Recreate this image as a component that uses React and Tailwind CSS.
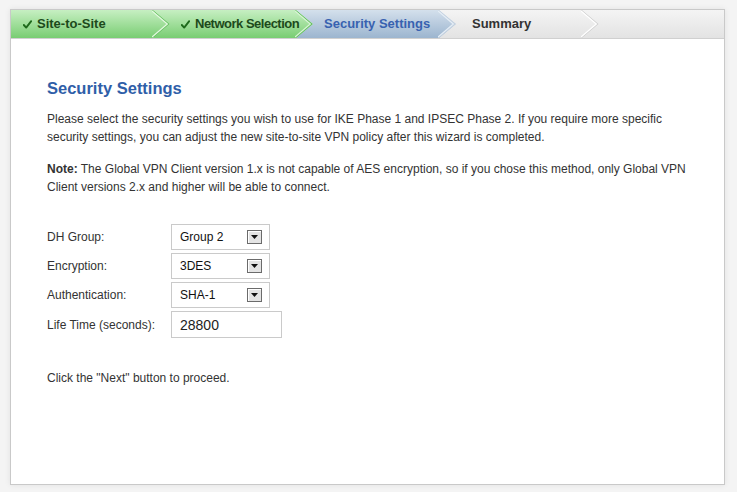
import React from "react";

const font = { fontFamily: '"Liberation Sans", Arial, Helvetica, sans-serif' };

function Chevron({ light, dark }) {
  return (
    <svg className="absolute right-0 top-0 h-[28px] w-[18px]" viewBox="0 0 18 28">
      <polyline points="0.5,0 16.8,14 0.5,28" fill="none" stroke={dark} strokeWidth="1.2" />
      <polyline points="0,1 15.3,14 0,27" fill="none" stroke={light} strokeWidth="1.2" />
    </svg>
  );
}

const clip = {
  clipPath: "polygon(0 0, calc(100% - 17px) 0, 100% 50%, calc(100% - 17px) 100%, 0 100%)",
};

function Tab({ children, bg, z, first, light, dark, pl }) {
  return (
    <div
      className={`relative flex h-[28px] w-[159px] items-center text-[13px] font-bold ${bg} ${z} ${first ? "" : "-ml-[16px]"} ${pl}`}
      style={clip}
    >
      {children}
      <Chevron light={light} dark={dark} />
    </div>
  );
}

function Check() {
  return (
    <svg className="mr-[5px]" width="9" height="9" viewBox="0 0 9 9">
      <path d="M0.8 5 L3.2 7.6 L8.2 1.2" fill="none" stroke="#1f6a1c" strokeWidth="1.9" strokeLinecap="round" strokeLinejoin="round" />
    </svg>
  );
}

function Select({ value }) {
  return (
    <div className="flex h-[26px] w-[99px] items-center justify-between border border-[#cacaca] bg-white pl-[8px] pr-[7px] text-[12px] text-[#111]">
      <span>{value}</span>
      <div className="flex h-[14px] w-[15px] items-center justify-center border border-[#6b6b6b] bg-[#e4e4e4] shadow-[inset_1px_1px_0_#fff]">
        <svg width="7" height="4" viewBox="0 0 7 4">
          <polygon points="0,0 7,0 3.5,4" fill="#111" />
        </svg>
      </div>
    </div>
  );
}

function Row({ label, children }) {
  return (
    <div className="flex items-center">
      <div className="w-[124px] text-[12px] text-[#333]">{label}</div>
      {children}
    </div>
  );
}

export default function App() {
  return (
    <div className="h-[492px] w-[737px] bg-[#f4f4f4] pl-[10px] pt-[9px]" style={font}>
      <div className="flex h-[476px] w-[715px] flex-col border border-[#c9c9c9] bg-white shadow-[0_0_6px_rgba(0,0,0,0.08)]">
        <div className="flex h-[29px] border-b border-[#d0d0d0] bg-gradient-to-b from-[#f4f4f4] to-[#e3e3e3]">
          <Tab first bg="bg-gradient-to-b from-[#c6efc2] to-[#78cd72]" z="z-40" light="#e4f8e0" dark="#6cc166" pl="pl-[12px]">
            <Check />
            <span className="text-[#1d4a1b]">Site-to-Site</span>
          </Tab>
          <Tab bg="bg-gradient-to-b from-[#c6efc2] to-[#78cd72]" z="z-30" light="#d8f4d4" dark="#66c060" pl="pl-[27px]">
            <Check />
            <span className="tracking-[-0.5px] text-[#1d4a1b]">Network Selection</span>
          </Tab>
          <Tab bg="bg-gradient-to-b from-[#d4e0ec] to-[#9cb5cf]" z="z-20" light="#e6eef6" dark="#c5d2e0" pl="pl-[27px]">
            <span className="text-[#3862b0]">Security Settings</span>
          </Tab>
          <Tab bg="bg-gradient-to-b from-[#f4f4f4] to-[#e3e3e3]" z="z-10" light="#ffffff" dark="#d2d2d2" pl="pl-[32px]">
            <span className="text-[#333]">Summary</span>
          </Tab>
        </div>
        <div className="w-[690px] pl-[36px] pt-[39px] text-[12px] leading-[18px] text-[#333]">
          <h1 className="text-[16.5px] font-bold leading-[20px] text-[#2f5ea8]">Security Settings</h1>
          <p className="mt-[12px] w-[653px]">
            Please select the security settings you wish to use for IKE Phase 1 and IPSEC Phase 2. If you require more specific
            security settings, you can adjust the new site-to-site VPN policy after this wizard is completed.
          </p>
          <p className="mt-[14px] w-[653px]">
            <b>Note:</b> The Global VPN Client version 1.x is not capable of AES encryption, so if you chose this method, only Global VPN
            Client versions 2.x and higher will be able to connect.
          </p>
          <div className="mt-[28px] flex flex-col gap-[3px]">
            <Row label="DH Group:">
              <Select value="Group 2" />
            </Row>
            <Row label="Encryption:">
              <Select value="3DES" />
            </Row>
            <Row label="Authentication:">
              <Select value="SHA-1" />
            </Row>
            <Row label="Life Time (seconds):">
              <div className="flex h-[27px] w-[111px] items-center border border-[#cacaca] bg-white pl-[8px] text-[14px] text-[#222]">
                28800
              </div>
            </Row>
          </div>
          <p className="mt-[31px]">Click the "Next" button to proceed.</p>
        </div>
      </div>
    </div>
  );
}
